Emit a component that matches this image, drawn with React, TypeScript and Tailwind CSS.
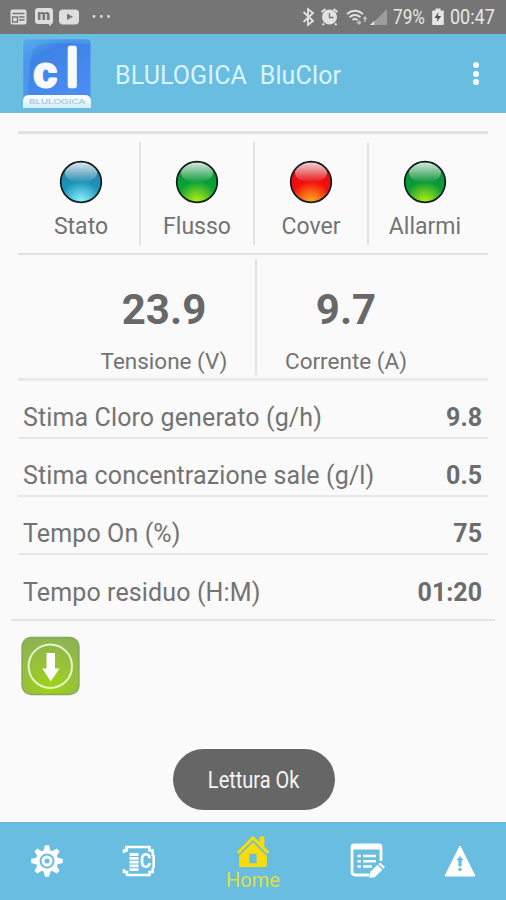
import { ReactNode } from 'react';

interface StatusLight {
  id: string;
  label: string;
  top: string;
  middle: string;
  glow: string;
}

const lights: StatusLight[] = [
  { id: 'stato', label: 'Stato', top: '#387d9f', middle: '#1b93b9', glow: '#8ff4ff' },
  { id: 'flusso', label: 'Flusso', top: '#168a3c', middle: '#0aa136', glow: '#b4f012' },
  { id: 'cover', label: 'Cover', top: '#cf1420', middle: '#f30d0b', glow: '#ffb01c' },
  { id: 'allarmi', label: 'Allarmi', top: '#168a3c', middle: '#0a9a3a', glow: '#b4f012' },
];

const readings = [
  { label: 'Stima Cloro generato (g/h)', value: '9.8' },
  { label: 'Stima concentrazione sale (g/l)', value: '0.5' },
  { label: 'Tempo On (%)', value: '75' },
];

const Light = ({ light }: { light: StatusLight }) => (
  <svg width="44" height="44" viewBox="0 0 44 44">
    <defs>
      <linearGradient id={`${light.id}-base`} x1="0" y1="0" x2="0" y2="1">
        <stop offset="0" stopColor={light.top} />
        <stop offset="0.6" stopColor={light.middle} />
        <stop offset="1" stopColor={light.middle} />
      </linearGradient>
      <radialGradient id={`${light.id}-glow`} cx="0.5" cy="1" r="0.52">
        <stop offset="0" stopColor={light.glow} />
        <stop offset="0.3" stopColor={light.glow} stopOpacity="0.75" />
        <stop offset="1" stopColor={light.glow} stopOpacity="0" />
      </radialGradient>
      <linearGradient id={`${light.id}-shine`} x1="0" y1="0" x2="0" y2="1">
        <stop offset="0" stopColor="#fff" stopOpacity="0.82" />
        <stop offset="1" stopColor="#fff" stopOpacity="0" />
      </linearGradient>
    </defs>
    <circle cx="22" cy="22" r="20.3" fill={`url(#${light.id}-base)`} />
    <circle cx="22" cy="22" r="20.3" fill={`url(#${light.id}-glow)`} />
    <ellipse cx="22" cy="12.5" rx="16" ry="10.3" fill={`url(#${light.id}-shine)`} />
    <circle cx="22" cy="22" r="20.3" fill="none" stroke="#111c1c" strokeWidth="1.7" />
  </svg>
);

const Logo = () => (
  <svg width="68" height="69" viewBox="0 0 68 69" className="overflow-visible">
    <defs>
      <linearGradient id="logo-bg" x1="0" y1="0" x2="0.6" y2="1">
        <stop offset="0" stopColor="#50a6ed" />
        <stop offset="0.3" stopColor="#3f83e6" />
        <stop offset="1" stopColor="#4b8df3" />
      </linearGradient>
      <linearGradient id="logo-band" x1="0" y1="0" x2="0" y2="1">
        <stop offset="0" stopColor="#fff" />
        <stop offset="1" stopColor="#d5edfb" />
      </linearGradient>
    </defs>
    <rect x="0.5" y="0.5" width="67" height="66" rx="4" fill="url(#logo-bg)" />
    <path d="M1 60V5Q1 1 5 1H63Q67 1 67 5C45 4 24 3 14 7C6 11 7 35 4 60Z" fill="#62b7f4" opacity="0.35" />
    <g fontFamily="Liberation Sans, sans-serif" fontWeight="700">
      <g fill="#f5faff" stroke="#f5faff" strokeLinejoin="round">
        <text x="10.5" y="47.5" fontSize="42" strokeWidth="3">c</text>
        <text x="43.5" y="46.5" fontSize="52" fontWeight="400" strokeWidth="4.5">l</text>
      </g>
      <path d="M0 69V61Q1 56 6 56H62Q67 56 68 61V69Z" fill="url(#logo-band)" />
      <text x="6" y="65" fontSize="7" fontWeight="400" textLength="56" lengthAdjust="spacingAndGlyphs" fill="#8fc3e2">BLULOGICA</text>
    </g>
  </svg>
);

const NotificationIcons = () => (
  <svg width="104" height="34" viewBox="0 0 104 34" fill="#dedede">
    <rect x="0.5" y="9.5" width="16" height="15" rx="2" />
    <path d="M2.5 13.5h12M2.5 17h5v5h-5zM9 17h5.5M9 20h5.5" fill="none" stroke="#757575" strokeWidth="1.3" />
    <path d="M28 8h12q3 0 3 3v10q0 3-2 3v2l-3-2H28q-3 0-3-3V11q0-3 3-3z" />
    <text x="27.3" y="20" fontFamily="Roboto, sans-serif" fontSize="15" fontWeight="900" fill="#757575">m</text>
    <rect x="49" y="9.5" width="20" height="15" rx="4" />
    <path d="M57 13.5v6.5l6-3.2z" fill="#757575" />
    <circle cx="84" cy="16.5" r="1.4" />
    <circle cx="91.3" cy="16.5" r="1.4" />
    <circle cx="98.5" cy="16.5" r="1.4" />
  </svg>
);

const SignalIcons = () => (
  <svg width="86" height="34" viewBox="0 0 86 34" fill="none" stroke="#e2e2e2">
    <path d="M1.5 12l9.5 9-5 4V9l5 4-9.5 9" strokeWidth="1.8" />
    <circle cx="27.5" cy="17" r="7.5" fill="#e2e2e2" stroke="none" />
    <path d="M19.5 12l4-3M31.5 9l4 3M22 23.5l-1.5 1.5M33 23.5l1.5 1.5" strokeWidth="2" />
    <path d="M27.5 13v4.5h4" stroke="#757575" strokeWidth="1.3" />
    <path d="M45 14q8-6.5 16 0M47.5 17.3q5.5-4.5 11 0M50.5 20q2.5-2 5 0" strokeWidth="1.8" />
    <path d="M57 20v4M55 22l2 2 2-2M63 17v5M61.5 19l1.5-2 1.5 2" strokeWidth="1.3" opacity="0.75" />
    <path d="M85 9v16H73V21z" fill="#9d9d9d" stroke="none" />
    <path d="M72.5 20.5V25h-4.5z" fill="#e2e2e2" stroke="none" />
  </svg>
);

const BatteryIcon = () => (
  <svg width="12" height="34" viewBox="0 0 12 34">
    <path d="M3.5 8.5h5v2H11q.8 0 .8.8v12.9q0 .8-.8.8H1q-.8 0-.8-.8V11.3q0-.8.8-.8h2.5z" fill="#e6e6e6" />
    <path d="M6.5 12 2.5 18h3l-.8 4 4.5-6H6z" fill="#505050" />
  </svg>
);

const DownloadIcon = () => (
  <svg width="60" height="60" viewBox="0 0 60 60">
    <defs>
      <radialGradient id="download-bg" cx="0.5" cy="0.85" r="0.85">
        <stop offset="0" stopColor="#a0d314" />
        <stop offset="0.5" stopColor="#98c238" />
        <stop offset="1" stopColor="#8db452" />
      </radialGradient>
    </defs>
    <rect x="2" y="1.5" width="57" height="57" rx="9" fill="url(#download-bg)" stroke="#80a958" strokeWidth="1.3" />
    <circle cx="30.3" cy="30.2" r="21.7" fill="none" stroke="#e7f4c8" strokeWidth="2" />
    <path d="M26.5 17h8.5v15.5h4.5L30.7 45.5 22.3 32.5h4.2z" fill="#fff" />
  </svg>
);

const GearIcon = () => (
  <svg width="34" height="34" viewBox="-17 -17 34 34">
    {[0, 45, 90, 135, 180, 225, 270, 315].map((angle) => (
      <path key={angle} d="M-3.8-9L-2-15.8H2L3.8-9z" fill="#fff" transform={`rotate(${angle})`} />
    ))}
    <circle r="9.3" fill="none" stroke="#fff" strokeWidth="3.6" />
    <circle r="4" fill="none" stroke="#fff" strokeWidth="3" />
  </svg>
);

const ChlorineIcon = () => (
  <svg width="34" height="34" viewBox="0 0 34 34" fill="none" stroke="#fff" strokeWidth="2.6">
    <path d="M2 9V6.5h2.5V3h23v3.5h3.2V12M2 25v3h3v3h22.5v-3h3.2v-4.5M31.7 11v13" />
    <path d="M7.5 10.5h9M7.5 14.3h9M7.5 18.1h9M7.5 21.9h9M7.5 25.7h9" strokeWidth="2.8" />
    <text x="17.8" y="24" fontFamily="Roboto, sans-serif" fontSize="20" fontWeight="700" fill="#fff" stroke="none" textLength="11.5" lengthAdjust="spacingAndGlyphs">C</text>
  </svg>
);

const HomeIcon = () => (
  <svg width="34" height="33" viewBox="0 0 34 33" fill="#f8dc0a">
    <path d="M17 .8 23.5 7V1.5h4.8v10.2l5 5-2.1 2.2L17 5.1 2.9 18.9.8 16.7z" />
    <path fillRule="evenodd" d="M17 7.3 30.8 20.7v9.8q0 1.5-1.5 1.5H4.7q-1.5 0-1.5-1.5v-9.8zM13.4 18.8v9.5h7.2v-9.5z" />
  </svg>
);

const NotesIcon = () => (
  <svg width="36" height="36" viewBox="0 0 36 36" fill="none" stroke="#fff">
    <path d="M19.5 32H5q-3 0-3-3V4q0-2 2-2h25q2 0 2 2v14" strokeWidth="2.8" />
    <path d="M2 2h29v4.5H2z" fill="#fff" stroke="none" />
    <path d="M7.5 13h3.3M13 13h13M7.5 18.2h3.3M13 18.2h13M7.5 23.5h3.3M13 23.5h9" strokeWidth="2.5" />
    <path d="M20.5 28.5 30 19.5l5 4.5-10 10-5.5 1z" fill="#fff" stroke="none" />
    <path d="M28 21.5l5 5" stroke="#69bde0" strokeWidth="1.2" />
  </svg>
);

const WarningIcon = () => (
  <svg width="34" height="34" viewBox="0 0 34 34">
    <path d="M17 2 32 32H2z" fill="#fff" stroke="#fff" strokeWidth="1" strokeLinejoin="round" />
    <path d="M17 12.5l3 3.5h-1.8v6h-2.4v-6H14z" fill="#69bde0" stroke="#69bde0" strokeWidth="0.8" />
    <circle cx="17" cy="25.5" r="1.7" fill="#69bde0" />
  </svg>
);

const NavButton = ({ label, className, children }: { label: string; className: string; children: ReactNode }) => (
  <button aria-label={label} className={`flex justify-center ${className}`}>
    {children}
  </button>
);

export default function App() {
  return (
    <div className="flex h-[900px] w-[506px] flex-col overflow-hidden bg-[#fafafa] font-[Roboto,sans-serif] text-[#737373]">
      <div className="flex h-[34px] shrink-0 items-center bg-[#757575] pl-2.5 text-[20px] leading-[34px] text-[#e8e8e8]">
        <NotificationIcons />
        <div className="ml-[188px]">
          <SignalIcons />
        </div>
        <span className="ml-[5px] w-[39px] origin-left scale-x-[0.86] whitespace-nowrap">79%</span>
        <BatteryIcon />
        <span className="ml-1.5 origin-left scale-x-[0.9] whitespace-nowrap">00:47</span>
      </div>

      <header className="flex h-[79px] shrink-0 items-center border-b border-[#7eb9cf] bg-[#69bde0] pl-[23px]">
        <Logo />
        <h1 className="ml-6 pt-[5px] text-[25px] tracking-[0.13px] whitespace-pre text-[#d9f4ff]">BLULOGICA  BluClor</h1>
        <div className="mr-[27px] ml-auto flex flex-col gap-[2.5px] pt-px">
          <i className="size-1.5 rounded-full bg-white" />
          <i className="size-1.5 rounded-full bg-white" />
          <i className="size-1.5 rounded-full bg-white" />
        </div>
      </header>

      <main className="flex flex-1 flex-col pt-[18px]">
        <section className="mx-[18px] flex h-[124px] border-t-[3px] border-b-2 border-[#e2e2e2] pt-2 pr-[7px] pb-2 pl-[9px]">
          {lights.map((light) => (
            <div key={light.id} className="flex w-[114px] shrink-0 flex-col items-center border-r-2 border-[#e2e2e2] pt-[18px] first:pr-1 last:border-r-0 last:pr-0.5">
              <Light light={light} />
              <span className="mt-[8px] text-[23px] leading-[30px]">{light.label}</span>
            </div>
          ))}
        </section>

        <section className="mx-[18px] flex h-[126px] border-b-[3px] border-[#e8e8e8] pt-1 pb-[3px] text-center">
          <div className="flex w-[239px] flex-col border-r-2 border-[#e2e2e2] pt-[27px] pl-[55px]">
            <strong className="text-[42px] leading-[48px] text-[#686868]">23.9</strong>
            <span className="mt-[12px] text-[22.5px] leading-[30px]">Tensione (V)</span>
          </div>
          <div className="flex w-[178px] flex-col pt-[27px]">
            <strong className="text-[42px] leading-[48px] text-[#686868]">9.7</strong>
            <span className="mt-[12px] text-[22.5px] leading-[30px]">Corrente (A)</span>
          </div>
        </section>

        {readings.map((reading) => (
          <div key={reading.label} className="mx-[18px] flex h-[58px] items-end justify-between border-b-2 border-[#e8e8e8] pr-1.5 pb-1 pl-[5px] text-[25px] leading-[30px]">
            <span className="tracking-[0.12px]">{reading.label}</span>
            <strong className="text-[#6c6c6c]">{reading.value}</strong>
          </div>
        ))}
        <div className="mx-[11px] flex h-[66px] items-start justify-between border-b-2 border-[#e4e4e4] pt-[23px] pr-[13px] pl-3 text-[25px] leading-[30px]">
          <span className="tracking-[0.12px]">Tempo residuo (H:M)</span>
          <strong className="text-[#6c6c6c]">01:20</strong>
        </div>

        <button aria-label="Download" className="mt-[15px] ml-5 self-start">
          <DownloadIcon />
        </button>

        <div className="mt-auto mb-[12px] ml-[173px] flex h-[61px] w-[162px] items-center justify-center rounded-full bg-[#666666] pt-1 text-[23px] text-[#f5f5f5]">
          <span className="scale-x-[0.87] whitespace-nowrap">Lettura Ok</span>
        </div>
      </main>

      <nav className="flex h-[78px] shrink-0 items-start bg-[#69bde0]">
        <NavButton label="Impostazioni" className="w-[94px] pt-[22px]">
          <GearIcon />
        </NavButton>
        <NavButton label="Cloro" className="w-[90px] pt-[22px]">
          <ChlorineIcon />
        </NavButton>
        <button className="flex w-[138px] flex-col items-center pt-[13px] text-[20px] leading-6 text-[#dde13d]">
          <HomeIcon />
          <span>Home</span>
        </button>
        <NavButton label="Programmi" className="w-[92px] pt-[21px]">
          <NotesIcon />
        </NavButton>
        <NavButton label="Allarmi" className="w-[92px] pt-[22px]">
          <WarningIcon />
        </NavButton>
      </nav>
    </div>
  );
}
